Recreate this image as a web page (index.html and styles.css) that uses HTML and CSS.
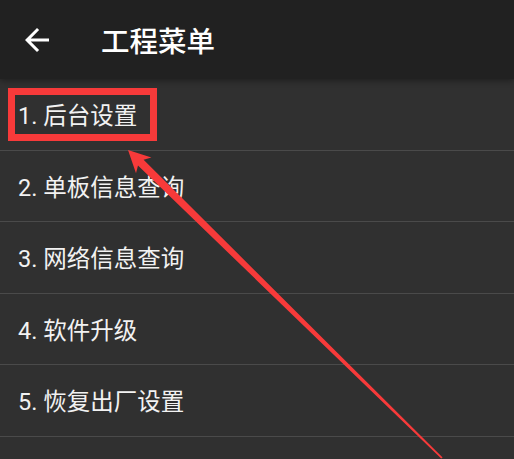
FILE: index.html
```html
<!DOCTYPE html>
<html lang="zh-CN">
<head>
  <meta charset="UTF-8" />
  <meta name="viewport" content="width=device-width, initial-scale=1.0" />
  <title>工程菜单</title>
  <link rel="stylesheet" href="styles.css">
</head>
<body>
  <div class="screen">
    <div class="toolbar">
      <svg class="back" viewBox="0 0 24 24"><path d="M20 11H7.83l5.59-5.59L12 4l-8 8 8 8 1.41-1.41L7.83 13H20v-2z" fill="#fff"/></svg>
      <h1>工程菜单</h1>
    </div>
    <div class="menu">
      <div class="item">1. 后台设置</div>
      <div class="item">2. 单板信息查询</div>
      <div class="item">3. 网络信息查询</div>
      <div class="item">4. 软件升级</div>
      <div class="item">5. 恢复出厂设置</div>
      <div class="item"></div>
    </div>

    <!-- annotation drawn over the screenshot -->
    <div class="mark"></div>
    <svg class="pointer" viewBox="0 0 514 459">
      <polygon fill="#f73a3a" points="128,150 151.4,157.6 143.6,159.8 442.6,457.4 441.2,458.6 138,165.5 136,173.2"/>
    </svg>
  </div>
</body>
</html>
```

FILE: styles.css
```css
html, body {
  margin: 0;
  background: #303030;
}
.screen {
  position: relative;
  width: 514px;
  height: 459px;
  overflow: hidden;
  font-family: Roboto, "Noto Sans CJK SC", sans-serif;
  color: #f2f2f2;
}
.toolbar {
  height: 79px;
  display: flex;
  align-items: center;
  padding-left: 19px;
  background: #212121;
  box-shadow: 0 2px 6px rgba(0,0,0,0.35);
  position: relative;
  z-index: 1;
}
.back {
  width: 36px;
  height: 36px;
  margin-right: 46px;
}
.toolbar h1 {
  margin: 0;
  font-family: "Noto Sans CJK SC", sans-serif;
  font-size: 28.5px;
  font-weight: 500;
  color: #fff;
}
.menu {
  display: flex;
  flex-direction: column;
}
.item {
  height: 70.5px;
  flex-shrink: 0;
  display: flex;
  align-items: center;
  padding-left: 18px;
  font-size: 23.5px;
  border-bottom: 1px solid #4a4a4a;
}
.mark {
  position: absolute;
  left: 8px;
  top: 88px;
  width: 149px;
  height: 53px;
  box-sizing: border-box;
  border: 7px solid #f73a3a;
  z-index: 2;
}
.pointer {
  position: absolute;
  left: 0;
  top: 0;
  width: 514px;
  height: 459px;
  z-index: 3;
}
```
